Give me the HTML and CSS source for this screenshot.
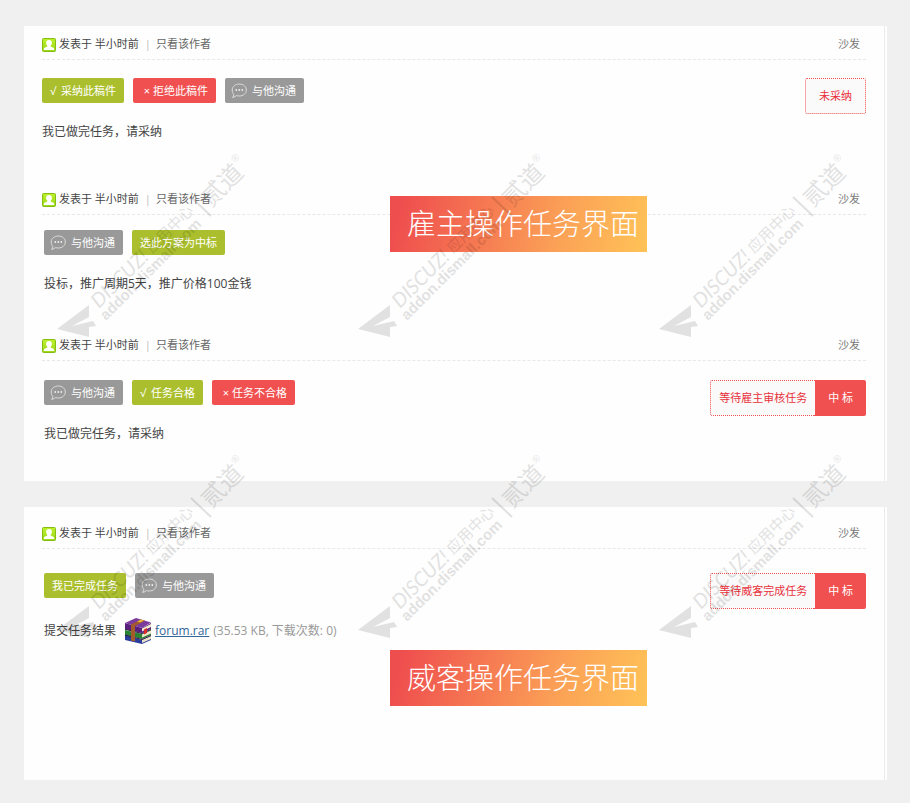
FILE: index.html
```html
<!DOCTYPE html>
<html lang="zh-CN">
<head>
  <meta charset="UTF-8">
  <meta name="viewport" content="width=device-width, initial-scale=1.0">
  <title>任务界面</title>
  <link rel="stylesheet" href="styles.css">
</head>
<body>
  <svg class="symbols" aria-hidden="true">
    <defs>
      <linearGradient id="userBg" x1="0" y1="0" x2="0" y2="1">
        <stop offset="0" stop-color="#bdf02c"/>
        <stop offset="1" stop-color="#9ad81a"/>
      </linearGradient>
    </defs>
    <symbol id="user" viewBox="0 0 14 14">
      <rect x=".5" y=".5" width="13" height="13" rx="1" fill="url(#userBg)" stroke="#86bd12"/>
      <path d="M7 2c2 0 3 1.300 2.900 3-.1 1.400-.6 2.100-1.200 2.600v.9l2.600 1.200c.7.4.9 1 .9 2.300H1.800c0-1.300.2-1.900.9-2.300l2.600-1.200v-.9C4.700 7.100 4.200 6.400 4.100 5 4 3.300 5 2 7 2z" fill="#fff"/>
    </symbol>
    <symbol id="chat" viewBox="0 0 16 16">
      <path d="M8.300 1C12.300 1 15.300 3.500 15.300 7s-3 6-7 6c-1 0-1.900-.1-2.700-.5-1 1-2.300 1.700-4 1.900.8-.9 1.200-1.800 1.200-3C1.700 10.300 1.200 8.700 1.200 7c0-3.500 3.100-6 7.100-6z" fill="none" stroke="#ddd" stroke-width="1"/>
      <circle cx="5.300" cy="7" r=".9" fill="#eee"/>
      <circle cx="8.300" cy="7" r=".9" fill="#eee"/>
      <circle cx="11.300" cy="7" r=".9" fill="#eee"/>
    </symbol>
  </svg>

  <div class="panel">
    <div class="panel-in">
      <div class="post">
        <div class="post-head">
          <svg class="icon-user"><use href="#user"/></svg>
          <span class="time">发表于 半小时前</span>
          <span class="pipe">|</span>
          <a href="#" class="only">只看该作者</a>
          <span class="floor">沙发</span>
        </div>
        <div class="post-body">
          <div class="post-main">
            <div class="btns">
              <button type="button" class="btn green"><span class="yes">√</span>采纳此稿件</button>
              <button type="button" class="btn red"><span class="no">×</span>拒绝此稿件</button>
              <button type="button" class="btn gray"><svg class="icon-chat"><use href="#chat"/></svg>与他沟通</button>
            </div>
            <p class="msg">我已做完任务，请采纳</p>
          </div>
          <div class="status"><span class="state state-only">未采纳</span></div>
        </div>
      </div>

      <div class="post post-bid">
        <div class="post-head">
          <svg class="icon-user"><use href="#user"/></svg>
          <span class="time">发表于 半小时前</span>
          <span class="pipe">|</span>
          <a href="#" class="only">只看该作者</a>
          <span class="floor">沙发</span>
        </div>
        <div class="post-body">
          <div class="post-main">
            <div class="btns">
              <button type="button" class="btn gray"><svg class="icon-chat"><use href="#chat"/></svg>与他沟通</button>
              <button type="button" class="btn green">选此方案为中标</button>
            </div>
            <p class="msg">投标，推广周期5天，推广价格100金钱</p>
          </div>
        </div>
      </div>

      <div class="post post-check">
        <div class="post-head">
          <svg class="icon-user"><use href="#user"/></svg>
          <span class="time">发表于 半小时前</span>
          <span class="pipe">|</span>
          <a href="#" class="only">只看该作者</a>
          <span class="floor">沙发</span>
        </div>
        <div class="post-body">
          <div class="post-main">
            <div class="btns">
              <button type="button" class="btn gray"><svg class="icon-chat"><use href="#chat"/></svg>与他沟通</button>
              <button type="button" class="btn green"><span class="yes">√</span>任务合格</button>
              <button type="button" class="btn red"><span class="no">×</span>任务不合格</button>
            </div>
            <p class="msg">我已做完任务，请采纳</p>
          </div>
          <div class="status"><span class="state">等待雇主审核任务</span><span class="win">中 标</span></div>
        </div>
      </div>
    </div>
    <div class="banner banner-boss">雇主操作任务界面</div>
  </div>

  <div class="panel">
    <div class="panel-in panel-worker">
      <div class="post post-work">
        <div class="post-head">
          <svg class="icon-user"><use href="#user"/></svg>
          <span class="time">发表于 半小时前</span>
          <span class="pipe">|</span>
          <a href="#" class="only">只看该作者</a>
          <span class="floor">沙发</span>
        </div>
        <div class="post-body">
          <div class="post-main">
            <div class="btns">
              <button type="button" class="btn green">我已完成任务</button>
              <button type="button" class="btn gray"><svg class="icon-chat"><use href="#chat"/></svg>与他沟通</button>
            </div>
            <div class="msg attach">
              <span>提交任务结果</span>
              <svg class="icon-rar" viewBox="0 0 28 28">
                <path d="M1 18l17 5 9-4v4l-9 4-17-4z" fill="#2b3d9c"/>
                <path d="M18 23l9-4v3l-9 4z" fill="#e9dfc4"/>
                <path d="M1 13l17 4 9-4v5l-9 4-17-4z" fill="#2b8434"/>
                <path d="M18 17.500l9-4v3l-9 4z" fill="#efe6cc"/>
                <path d="M1 6l17 5 9-5v6l-9 4-17-4z" fill="#5a1f7d"/>
                <path d="M18 11.500l9-4.500v3l-9 4.500z" fill="#f2e8cf"/>
                <path d="M1 6L12 1l15 4.500-9 5.500z" fill="#7a3a9e"/>
                <path d="M1 12.200l17 4.300 9-4M1 18l17 4.500 9-4" fill="none" stroke="#2a1240" stroke-width="1"/>
                <path d="M7 7.600L17 2.500l4 1.200-10 5.200v15.600l-4-1z" fill="#a35a2c"/>
                <path d="M13 4.600l4-2.100 3 .9-4 2.200z" fill="#e8b93c"/>
                <path d="M20 12.500l3-1.500v5l-3 1.500z" fill="#d82a2a"/>
              </svg>
              <a href="#" class="file">forum.rar</a>
              <span class="size">(35.53 KB, 下载次数: 0)</span>
            </div>
          </div>
          <div class="status"><span class="state">等待威客完成任务</span><span class="win">中 标</span></div>
        </div>
      </div>
    </div>
    <div class="banner banner-worker">威客操作任务界面</div>
  </div>

  <div class="marks" aria-hidden="true">
    <svg>
      <g id="mark">
        <path d="M0 177L32 153V165L15 174L36 169L39 174L32 175V185z"/>
        <path d="M134 45L154 64" class="mark-line"/>
        <text class="mark-brand" transform="translate(42 157) rotate(-45)">DISCUZ!</text>
        <text class="mark-app" transform="translate(95 102) rotate(-45)">应用中心</text>
        <text class="mark-url" transform="translate(49 169) rotate(-45)">addon.dismall.com</text>
        <text class="mark-name" transform="translate(154 56) rotate(-45)">贰道</text>
        <text class="mark-reg" transform="translate(178 11) rotate(-45)">®</text>
      </g>
    </svg>
    <svg><use href="#mark"/></svg>
    <svg><use href="#mark"/></svg>
    <svg><use href="#mark"/></svg>
    <svg><use href="#mark"/></svg>
    <svg><use href="#mark"/></svg>
  </div>
</body>
</html>
```

FILE: styles.css
```css
* { box-sizing: border-box; }
body {
  position: relative;
  margin: 0;
  padding: 26px 23px 23px 24px;
  background: #f0f0f0;
  color: #444;
  font: 11px/20px "Open Sans", "Noto Sans CJK SC", sans-serif;
}
a { color: inherit; text-decoration: none; }
.symbols { position: absolute; width: 0; height: 0; }
.panel {
  position: relative;
  padding-right: 2px;
  background: #fefefe;
}
.panel + .panel { margin-top: 26px; }
.panel-in {
  padding: 0 18px;
  border-right: 1px solid #ebebeb;
}
.panel-worker { padding-top: 8px; }

/* post */
.post { height: 155px; }
.post-head {
  display: flex;
  align-items: center;
  height: 34px;
  padding-top: 3px;
  border-bottom: 1px dashed #e8e8e8;
}
.icon-user {
  width: 14px; height: 14px;
  margin: 2px 3px 0 0;
}
.pipe { margin: 0 5px 0 6px; color: #bbb; }
.only { color: #666; }
.floor {
  margin-left: auto;
  padding-right: 6px;
  color: #777;
}
.post-body {
  display: flex;
  align-items: flex-start;
  padding-top: 18px;
}
.post-main { flex: 1; }
.post-bid { height: 146px; }
.post-bid .post-body { padding: 15px 0 0 2px; }
.post-check { height: 154px; }
.post-check .post-body { padding: 19px 0 0 2px; }
.post-work { height: 265px; }
.post-work .post-body { padding: 24px 0 0 2px; }

/* buttons */
.btns { display: flex; gap: 9px; }
.btn {
  display: flex;
  align-items: center;
  height: 25px;
  padding: 0 8px;
  border: 0;
  border-radius: 2px;
  color: #fff;
  font: inherit;
  cursor: pointer;
}
.yes { width: 11px; text-align: left; }
.no { width: 12px; text-align: center; }
.green { background: #abbf2e; }
.red { background: #f05050; }
.gray { background: #999; padding-left: 6px; }
.icon-chat {
  width: 16px; height: 16px;
  margin-right: 5px;
}
.msg {
  margin: 19px 0 0;
  font-size: 12px;
}
.attach {
  display: flex;
  align-items: center;
  height: 28px;
}
.icon-rar {
  width: 28px; height: 28px;
  margin: 0 3px 0 8px;
}
.file {
  color: #369;
  text-decoration: underline;
}
.size { margin-left: 4px; color: #999; }

/* status */
.status {
  display: flex;
  line-height: 34px;
}
.state {
  padding: 0 8px;
  border: 1px dotted #f05050;
  border-right: 0;
  border-radius: 2px 0 0 2px;
  background: #fafafa;
  color: #e8303a;
}
.state-only {
  padding: 0 13px;
  border: 1px dotted #f05050;
  border-radius: 2px;
}
.win {
  padding: 1px 13px;
  border-radius: 0 2px 2px 0;
  background: #f05050;
  color: #fff;
}

/* title over the panel */
.banner {
  position: absolute;
  left: 366px;
  padding: 0 8px 0 17px;
  background: linear-gradient(105deg, #ef4e4e 5%, #fba056 65%, #ffc357);
  color: #fff;
  font-size: 29px;
  font-weight: 300;
  line-height: 56px;
}
.banner-boss { top: 170px; }
.banner-worker { top: 143px; }

/* watermark */
.marks {
  position: absolute;
  top: 0; right: 0; bottom: 0; left: 0;
  display: grid;
  grid-template-columns: repeat(3, 301px);
  grid-template-rows: repeat(2, 301px);
  padding: 152px 0 0 57px;
  overflow: hidden;
  pointer-events: none;
  opacity: .11;
}
.marks svg { width: 192px; height: 190px; overflow: visible; }
.mark-line { stroke: #000; stroke-width: 2px; }
.mark-brand { font: italic 20px Lato, sans-serif; }
.mark-app { font: 15px "Noto Sans CJK SC", sans-serif; }
.mark-url { font: bold 15px "Liberation Sans", sans-serif; }
.mark-name { font: 24px "Noto Sans CJK SC", sans-serif; }
.mark-reg { font: 10px "Liberation Sans", sans-serif; }
```
